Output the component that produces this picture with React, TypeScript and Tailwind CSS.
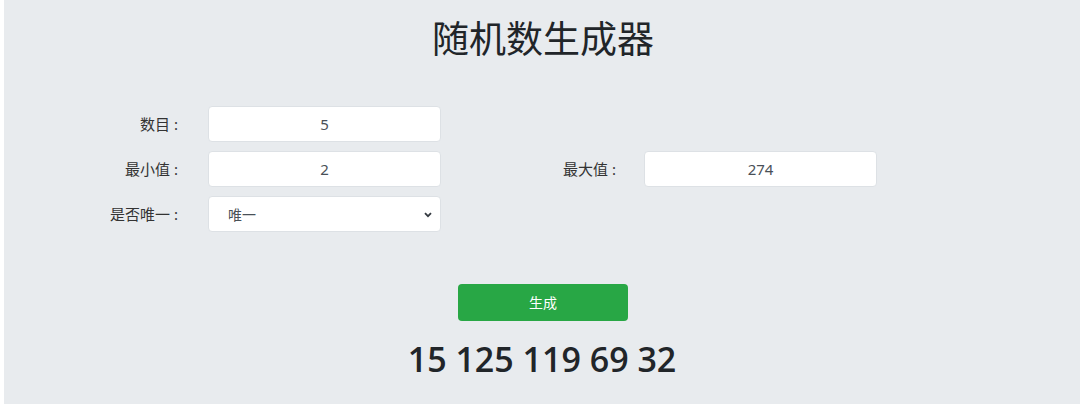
import React from "react";

const cjk = { fontFamily: '"Noto Sans", "Noto Sans CJK SC", sans-serif' };

function Label({ children, w }: { children: React.ReactNode; w: string }) {
  return (
    <div className={`${w} shrink-0 text-right text-[15px] text-[#333] leading-[36px] pr-[2px]`} style={cjk}>
      {children}
    </div>
  );
}

function Field({ value }: { value: string }) {
  return (
    <input
      readOnly
      value={value}
      className="w-[233px] h-[36px] shrink-0 rounded-[4px] border border-[#dde1e5] bg-white text-center text-[15px] text-[#495057] outline-none"
      style={cjk}
    />
  );
}

export default function App() {
  return (
    <div className="w-[1080px] h-[405px] bg-white">
      <div className="ml-[4px] h-[404px] bg-[#e8ebee] flex flex-col items-center" style={cjk}>
        <h1 className="mt-[16px] ml-[2px] text-[37px] leading-[46px] text-[#212529] font-normal" style={cjk}>
          随机数生成器
        </h1>
        <div className="self-stretch mt-[44px] flex flex-col gap-[9px]">
          <div className="flex items-center">
            <Label w="w-[176px]">数目 :</Label>
            <div className="w-[28px]" />
            <Field value="5" />
          </div>
          <div className="flex items-center">
            <Label w="w-[176px]">最小值 :</Label>
            <div className="w-[28px]" />
            <Field value="2" />
            <Label w="w-[177px]">最大值 :</Label>
            <div className="w-[26px]" />
            <Field value="274" />
          </div>
          <div className="flex items-center">
            <Label w="w-[176px]">是否唯一 :</Label>
            <div className="w-[28px]" />
            <div className="relative w-[233px] h-[36px] rounded-[4px] border border-[#dde1e5] bg-white flex items-center pl-[19px] text-[14px] text-[#495057]">
              唯一
              <svg className="absolute right-[8px] top-[15px]" width="8" height="6" viewBox="0 0 8 6">
                <path d="M1 1.2 L4 4.2 L7 1.2" fill="none" stroke="#343a40" strokeWidth="1.8" />
              </svg>
            </div>
          </div>
        </div>
        <button
          className="mt-[52px] ml-[2px] w-[170px] h-[37px] rounded-[4px] bg-[#28a745] text-white text-[14px]"
          style={cjk}
        >
          生成
        </button>
        <div
          className="mt-[17px] text-[34px] leading-[42px] font-semibold text-[#212529]"
          style={{ fontFamily: '"Open Sans", sans-serif' }}
        >
          15 125 119 69 32
        </div>
      </div>
    </div>
  );
}
